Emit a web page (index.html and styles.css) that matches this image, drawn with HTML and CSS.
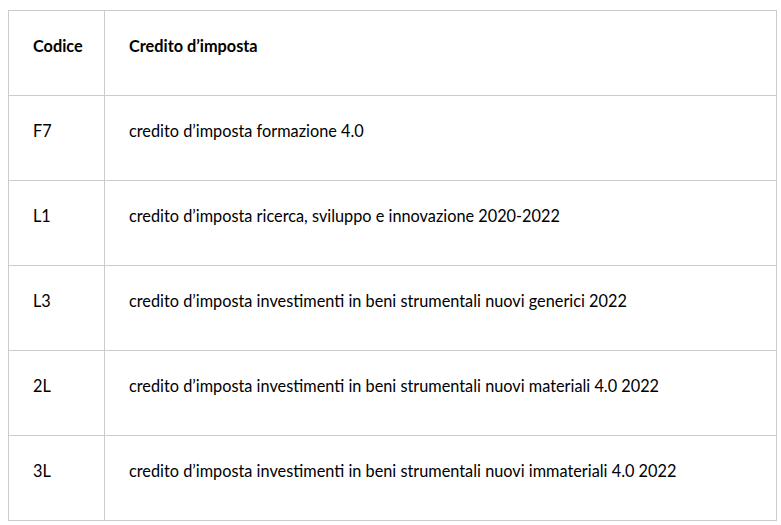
FILE: index.html
```html
<!DOCTYPE html>
<html lang="it">
<head>
<meta charset="utf-8">
<link rel="stylesheet" href="styles.css">
</head>
<body>
<table class="codes">
  <thead>
    <tr><th class="c1">Codice</th><th class="c2">Credito d’imposta</th></tr>
  </thead>
  <tbody>
    <tr><td>F7</td><td>credito d’imposta formazione 4.0</td></tr>
    <tr><td>L1</td><td>credito d’imposta ricerca, sviluppo e innovazione 2020-2022</td></tr>
    <tr><td>L3</td><td>credito d’imposta investimenti in beni strumentali nuovi generici 2022</td></tr>
    <tr><td>2L</td><td>credito d’imposta investimenti in beni strumentali nuovi materiali 4.0 2022</td></tr>
    <tr><td>3L</td><td>credito d’imposta investimenti in beni strumentali nuovi immateriali 4.0 2022</td></tr>
  </tbody>
</table>
</body>
</html>
```
FILE: styles.css
```css
html, body { background: #ffffff; }
body {
  margin: 10px 0 0 8px;
  font-family: Lato, "Open Sans", sans-serif;
  font-size: 16.3px;
  color: #000000;
}
.codes {
  border-collapse: collapse;
  width: 769px;
  table-layout: fixed;
}
.codes th, .codes td {
  border: 1px solid #cccccc;
  height: 85px;
  box-sizing: border-box;
  padding: 23px 24px 0 24px;
  vertical-align: top;
  text-align: left;
  line-height: 24px;
}
.codes th { font-weight: bold; }
.codes .c1 { width: 96px; }
```
